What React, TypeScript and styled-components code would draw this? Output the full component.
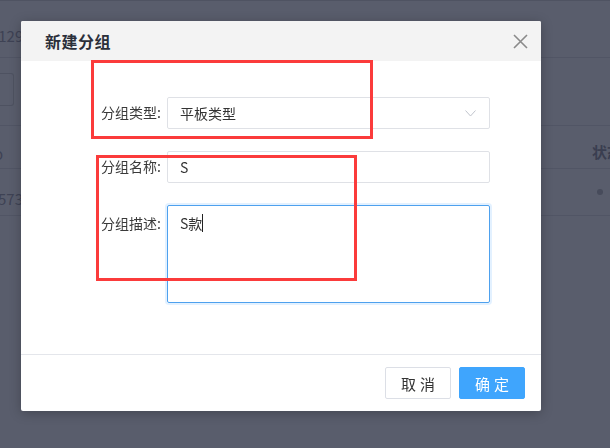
import { createGlobalStyle, styled } from 'styled-components';

const GlobalStyle = createGlobalStyle`
  html, body {
    margin: 0;
    padding: 0;
    width: 610px;
    height: 448px;
    overflow: hidden;
    background: #595d6c;
    font-family: "Noto Sans CJK SC", "Noto Sans", sans-serif;
  }
`;

function App() {
  return (
    <>
      <GlobalStyle />
      <StyledPage>
        <StyledBgRow $height={57}>
          <StyledBgText $left={-6}>l129</StyledBgText>
        </StyledBgRow>
        <StyledBgRow $height={68}>
          <StyledBgBox />
        </StyledBgRow>
        <StyledBgRow $height={43}>
          <StyledBgText $left={-6}>o</StyledBgText>
          <StyledBgHead>状态</StyledBgHead>
        </StyledBgRow>
        <StyledBgRow $height={47}>
          <StyledBgText $left={-2}>573</StyledBgText>
          <StyledBgDot />
        </StyledBgRow>
      </StyledPage>
      <StyledOverlay>
        <StyledModal>
          <StyledHeader>
            <StyledTitle>新建分组</StyledTitle>
            <StyledClose aria-label="close">
              <svg width="15" height="15" viewBox="0 0 15 15">
                <path d="M1 1L14 14M14 1L1 14" stroke="#8a8a8a" strokeWidth="1.6" fill="none" />
              </svg>
            </StyledClose>
          </StyledHeader>
          <StyledBody>
            <StyledRow>
              <StyledLabel>分组类型:</StyledLabel>
              <StyledField>
                <span>平板类型</span>
                <svg width="11" height="7" viewBox="0 0 11 7">
                  <path d="M0.5 0.5L5.5 6L10.5 0.5" stroke="#c0c4cc" strokeWidth="1" fill="none" />
                </svg>
              </StyledField>
            </StyledRow>
            <StyledRow>
              <StyledLabel>分组名称:</StyledLabel>
              <StyledField>
                <span>S</span>
              </StyledField>
            </StyledRow>
            <StyledRow>
              <StyledLabel $top>分组描述:</StyledLabel>
              <StyledTextArea>
                S款<StyledCaret />
              </StyledTextArea>
            </StyledRow>
          </StyledBody>
          <StyledFooter>
            <StyledButton>取消</StyledButton>
            <StyledButton $primary>确定</StyledButton>
          </StyledFooter>
          <StyledMark $left={70} $top={39} $width={282} $height={79} />
          <StyledMark $left={75} $top={134} $width={261} $height={126} />
        </StyledModal>
      </StyledOverlay>
    </>
  );
}

export default App;

const StyledPage = styled.div`
  display: flex;
  flex-direction: column;
  width: 610px;
  height: 448px;
  border-top: 1px solid #4f5362;
  box-sizing: border-box;
`;

const StyledBgRow = styled.div<{ $height: number }>`
  position: relative;
  display: flex;
  align-items: center;
  height: ${(p) => p.$height}px;
  border-bottom: 1px solid #515565;
  box-sizing: border-box;
`;

const StyledBgText = styled.span<{ $left: number }>`
  margin-left: ${(p) => p.$left}px;
  margin-top: 12px;
  font-size: 15px;
  color: #3e4254;
`;

const StyledBgHead = styled.span`
  margin-left: auto;
  margin-right: -12px;
  margin-top: 8px;
  font-size: 15px;
  font-weight: 700;
  color: #3a3e50;
`;

const StyledBgBox = styled.div`
  width: 13px;
  height: 31px;
  margin-top: -4px;
  border: 1px solid #4e5261;
  border-left: none;
  border-radius: 0 3px 3px 0;
`;

const StyledBgDot = styled.span`
  width: 6px;
  height: 6px;
  margin-left: auto;
  margin-right: 7px;
  border-radius: 50%;
  background: #474b5b;
`;

const StyledOverlay = styled.div`
  position: fixed;
  inset: 0;
  padding: 21px 0 0 21px;
`;

const StyledModal = styled.div`
  position: relative;
  display: flex;
  flex-direction: column;
  width: 520px;
  height: 390px;
  background: #ffffff;
  border-radius: 2px;
  box-shadow: 0 2px 12px rgba(0, 0, 0, 0.25);
  overflow: hidden;
`;

const StyledHeader = styled.div`
  display: flex;
  align-items: center;
  justify-content: space-between;
  height: 40px;
  padding: 0 13px 0 24px;
  background: #f3f3f3;
`;

const StyledTitle = styled.h2`
  margin: 0;
  font-size: 16px;
  font-weight: 700;
  color: #2b2f3a;
  letter-spacing: 0.5px;
`;

const StyledClose = styled.button`
  display: flex;
  padding: 0;
  border: none;
  background: none;
`;

const StyledBody = styled.div`
  display: flex;
  flex-direction: column;
  gap: 22px;
  height: 294px;
  padding-top: 36px;
  border-bottom: 1px solid #e4e6eb;
  box-sizing: border-box;
`;

const StyledRow = styled.div`
  display: flex;
  align-items: flex-start;
`;

const StyledLabel = styled.label<{ $top?: boolean }>`
  width: 146px;
  padding-right: 6px;
  line-height: 31px;
  margin-top: ${(p) => (p.$top ? '3px' : '0')};
  text-align: right;
  font-size: 14px;
  color: #3a3a3a;
  box-sizing: border-box;
`;

const StyledField = styled.div`
  display: flex;
  align-items: center;
  justify-content: space-between;
  width: 323px;
  height: 32px;
  padding: 0 13px 0 12px;
  border: 1px solid #dfe1e6;
  border-radius: 2px;
  font-size: 14px;
  color: #333333;
  box-sizing: border-box;
`;

const StyledTextArea = styled.div`
  display: flex;
  align-items: flex-start;
  width: 323px;
  height: 98px;
  padding: 6px 12px;
  border: 1px solid #4ea1ee;
  border-radius: 2px;
  box-shadow: 0 0 0 2px rgba(64, 158, 255, 0.15);
  font-size: 14px;
  line-height: 22px;
  color: #333333;
  box-sizing: border-box;
`;

const StyledCaret = styled.span`
  width: 1px;
  height: 18px;
  margin-top: 2px;
  background: #222222;
`;

const StyledFooter = styled.div`
  display: flex;
  justify-content: flex-end;
  gap: 8px;
  padding: 12px 16px 0 0;
`;

const StyledButton = styled.button<{ $primary?: boolean }>`
  width: 66px;
  height: 32px;
  padding: 0 0 0 4px;
  border: 1px solid ${(p) => (p.$primary ? '#3fa5fd' : '#dcdfe6')};
  border-radius: 2px;
  background: ${(p) => (p.$primary ? '#3fa5fd' : '#ffffff')};
  color: ${(p) => (p.$primary ? '#ffffff' : '#333333')};
  font-family: "Noto Sans CJK SC", sans-serif;
  font-size: 15px;
  letter-spacing: 4px;
`;

const StyledMark = styled.div<{ $left: number; $top: number; $width: number; $height: number }>`
  position: absolute;
  left: ${(p) => p.$left}px;
  top: ${(p) => p.$top}px;
  width: ${(p) => p.$width}px;
  height: ${(p) => p.$height}px;
  border: 3px solid #fb3b3b;
  box-sizing: border-box;
  pointer-events: none;
`;
